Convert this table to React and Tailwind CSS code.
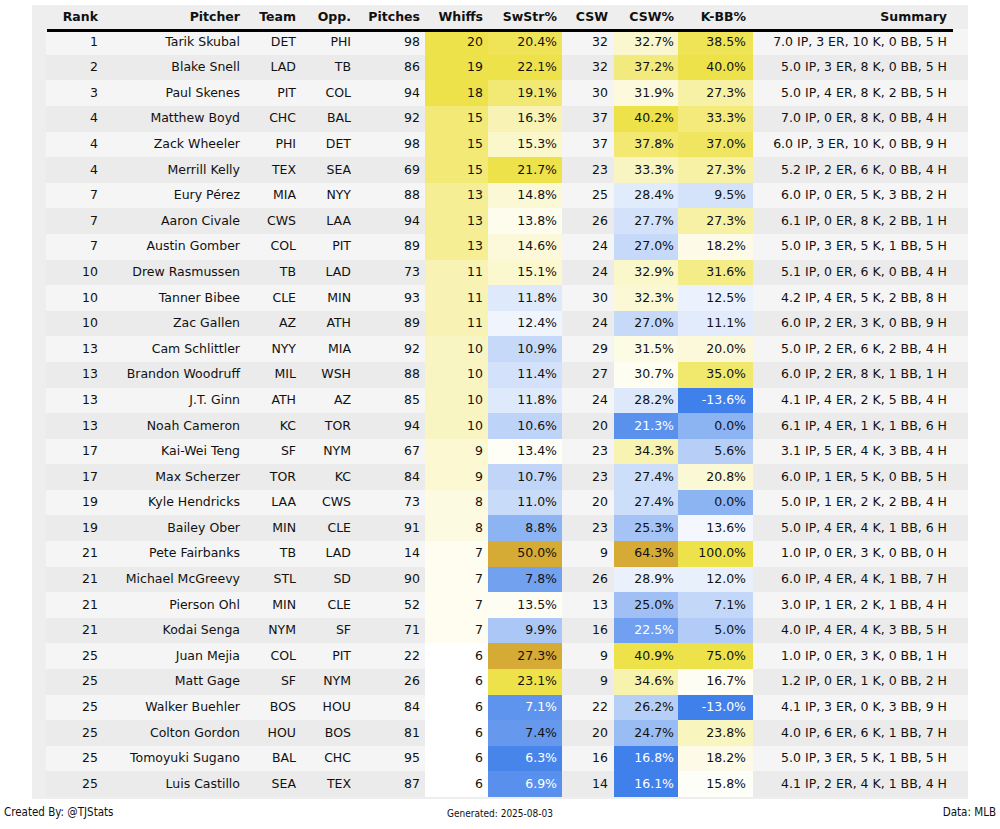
import React from "react";

const rows = [
  [1, "Tarik Skubal", "DET", "PHI", 98, 20, 20.4, 32, 32.7, 38.5, "7.0 IP, 3 ER, 10 K, 0 BB, 5 H"],
  [2, "Blake Snell", "LAD", "TB", 86, 19, 22.1, 32, 37.2, 40.0, "5.0 IP, 3 ER, 8 K, 0 BB, 5 H"],
  [3, "Paul Skenes", "PIT", "COL", 94, 18, 19.1, 30, 31.9, 27.3, "5.0 IP, 4 ER, 8 K, 2 BB, 5 H"],
  [4, "Matthew Boyd", "CHC", "BAL", 92, 15, 16.3, 37, 40.2, 33.3, "7.0 IP, 0 ER, 8 K, 0 BB, 4 H"],
  [4, "Zack Wheeler", "PHI", "DET", 98, 15, 15.3, 37, 37.8, 37.0, "6.0 IP, 3 ER, 10 K, 0 BB, 9 H"],
  [4, "Merrill Kelly", "TEX", "SEA", 69, 15, 21.7, 23, 33.3, 27.3, "5.2 IP, 2 ER, 6 K, 0 BB, 4 H"],
  [7, "Eury Pérez", "MIA", "NYY", 88, 13, 14.8, 25, 28.4, 9.5, "6.0 IP, 0 ER, 5 K, 3 BB, 2 H"],
  [7, "Aaron Civale", "CWS", "LAA", 94, 13, 13.8, 26, 27.7, 27.3, "6.1 IP, 0 ER, 8 K, 2 BB, 1 H"],
  [7, "Austin Gomber", "COL", "PIT", 89, 13, 14.6, 24, 27.0, 18.2, "5.0 IP, 3 ER, 5 K, 1 BB, 5 H"],
  [10, "Drew Rasmussen", "TB", "LAD", 73, 11, 15.1, 24, 32.9, 31.6, "5.1 IP, 0 ER, 6 K, 0 BB, 4 H"],
  [10, "Tanner Bibee", "CLE", "MIN", 93, 11, 11.8, 30, 32.3, 12.5, "4.2 IP, 4 ER, 5 K, 2 BB, 8 H"],
  [10, "Zac Gallen", "AZ", "ATH", 89, 11, 12.4, 24, 27.0, 11.1, "6.0 IP, 2 ER, 3 K, 0 BB, 9 H"],
  [13, "Cam Schlittler", "NYY", "MIA", 92, 10, 10.9, 29, 31.5, 20.0, "5.0 IP, 2 ER, 6 K, 2 BB, 4 H"],
  [13, "Brandon Woodruff", "MIL", "WSH", 88, 10, 11.4, 27, 30.7, 35.0, "6.0 IP, 2 ER, 8 K, 1 BB, 1 H"],
  [13, "J.T. Ginn", "ATH", "AZ", 85, 10, 11.8, 24, 28.2, -13.6, "4.1 IP, 4 ER, 2 K, 5 BB, 4 H"],
  [13, "Noah Cameron", "KC", "TOR", 94, 10, 10.6, 20, 21.3, 0.0, "6.1 IP, 4 ER, 1 K, 1 BB, 6 H"],
  [17, "Kai-Wei Teng", "SF", "NYM", 67, 9, 13.4, 23, 34.3, 5.6, "3.1 IP, 5 ER, 4 K, 3 BB, 4 H"],
  [17, "Max Scherzer", "TOR", "KC", 84, 9, 10.7, 23, 27.4, 20.8, "6.0 IP, 1 ER, 5 K, 0 BB, 5 H"],
  [19, "Kyle Hendricks", "LAA", "CWS", 73, 8, 11.0, 20, 27.4, 0.0, "5.0 IP, 1 ER, 2 K, 2 BB, 4 H"],
  [19, "Bailey Ober", "MIN", "CLE", 91, 8, 8.8, 23, 25.3, 13.6, "5.0 IP, 4 ER, 4 K, 1 BB, 6 H"],
  [21, "Pete Fairbanks", "TB", "LAD", 14, 7, 50.0, 9, 64.3, 100.0, "1.0 IP, 0 ER, 3 K, 0 BB, 0 H"],
  [21, "Michael McGreevy", "STL", "SD", 90, 7, 7.8, 26, 28.9, 12.0, "6.0 IP, 4 ER, 4 K, 1 BB, 7 H"],
  [21, "Pierson Ohl", "MIN", "CLE", 52, 7, 13.5, 13, 25.0, 7.1, "3.0 IP, 1 ER, 2 K, 1 BB, 4 H"],
  [21, "Kodai Senga", "NYM", "SF", 71, 7, 9.9, 16, 22.5, 5.0, "4.0 IP, 4 ER, 4 K, 3 BB, 5 H"],
  [25, "Juan Mejia", "COL", "PIT", 22, 6, 27.3, 9, 40.9, 75.0, "1.0 IP, 0 ER, 3 K, 0 BB, 1 H"],
  [25, "Matt Gage", "SF", "NYM", 26, 6, 23.1, 9, 34.6, 16.7, "1.2 IP, 0 ER, 1 K, 0 BB, 2 H"],
  [25, "Walker Buehler", "BOS", "HOU", 84, 6, 7.1, 22, 26.2, -13.0, "4.1 IP, 3 ER, 0 K, 3 BB, 9 H"],
  [25, "Colton Gordon", "HOU", "BOS", 81, 6, 7.4, 20, 24.7, 23.8, "4.0 IP, 6 ER, 6 K, 1 BB, 7 H"],
  [25, "Tomoyuki Sugano", "BAL", "CHC", 95, 6, 6.3, 16, 16.8, 18.2, "5.0 IP, 3 ER, 5 K, 1 BB, 5 H"],
  [25, "Luis Castillo", "SEA", "TEX", 87, 6, 6.9, 14, 16.1, 15.8, "4.1 IP, 2 ER, 4 K, 1 BB, 4 H"],
];

const BLUE = [64, 128, 234];
const WHITE = [255, 255, 255];
const YELLOW = [238, 226, 74];
const GOLD = [213, 170, 53];

const mix = (a, b, t) => `rgb(${a.map((v, i) => Math.round(v + (b[i] - v) * t)).join(",")})`;

// center, scale below, scale above, "over" cutoff, white text below
const scales = {
  whiffs: { c: 6, lo: 1, hi: 12, over: 999, white: -999 },
  swstr: { c: 13, lo: 7, hi: 8, over: 25, white: 7.3 },
  csw: { c: 30, lo: 10, hi: 10, over: 50, white: 23 },
  kbb: { c: 15, lo: 25, hi: 25, over: 999, white: -5 },
};

const heat = (v, key) => {
  const s = scales[key];
  if (v > s.over) return { background: mix(GOLD, GOLD, 0), color: "#111" };
  const t = v < s.c ? -(s.c - v) / s.lo : (v - s.c) / s.hi;
  const bg = t < 0 ? mix(WHITE, BLUE, Math.min(1, -t)) : mix(WHITE, YELLOW, Math.min(1, t));
  return { background: bg, color: v < s.white ? "#ffffff" : "#111" };
};

const cols = "grid grid-cols-[57px_142px_56px_55px_69px_63px_74px_52px_64px_75px_200px]";

const Cell = ({ children, pr = "pr-[5px]", style, bold }) => (
  <div
    className={`flex items-center justify-end ${pr} ${bold ? "font-bold" : ""}`}
    style={style}
  >
    {children}
  </div>
);

const pct = (v) => `${v.toFixed(1)}%`;

export default function App() {
  return (
    <div className="w-[1000px] h-[829px] bg-white font-['DejaVu_Sans',sans-serif] text-[12.5px] text-[#111]">
      <div className="pt-[5px] pl-[32px]">
        <div className="w-[936px] h-[794px] bg-[#eeeeee] pl-[14px]">
          <div className={`${cols} h-[24.2px]`}>
            <Cell bold>Rank</Cell>
            <Cell bold>Pitcher</Cell>
            <Cell bold>Team</Cell>
            <Cell bold>Opp.</Cell>
            <Cell bold>Pitches</Cell>
            <Cell bold>Whiffs</Cell>
            <Cell bold>SwStr%</Cell>
            <Cell bold pr="pr-[6px]">CSW</Cell>
            <Cell bold pr="pr-[4px]">CSW%</Cell>
            <Cell bold pr="pr-[7px]">K-BB%</Cell>
            <Cell bold pr="pr-[6px]">Summary</Cell>
          </div>
          <div className="relative z-10 ml-[1px] w-[906px] h-[3px] -mb-[3px] bg-black" />
          {rows.map((r, i) => (
            <div
              key={i}
              className={`${cols} h-[25.6px] ${i % 2 === 0 ? "bg-[#f5f5f5]" : "bg-[#ebebeb]"}`}
            >
              <Cell>{r[0]}</Cell>
              <Cell>{r[1]}</Cell>
              <Cell>{r[2]}</Cell>
              <Cell>{r[3]}</Cell>
              <Cell>{r[4]}</Cell>
              <Cell style={heat(r[5], "whiffs")}>{r[5]}</Cell>
              <Cell style={heat(r[6], "swstr")}>{pct(r[6])}</Cell>
              <Cell pr="pr-[6px]">{r[7]}</Cell>
              <Cell pr="pr-[4px]" style={heat(r[8], "csw")}>{pct(r[8])}</Cell>
              <Cell pr="pr-[7px]" style={heat(r[9], "kbb")}>{pct(r[9])}</Cell>
              <Cell pr="pr-[6px]">{r[10]}</Cell>
            </div>
          ))}
        </div>
      </div>
      <div className="flex items-center justify-between h-[30px] px-[4px] pb-[2px] text-[11.5px] font-stretch-condensed">
        <span className="w-[200px]">Created By: @TJStats</span>
        <span className="text-[10px]">Generated: 2025-08-03</span>
        <span className="w-[200px] text-right">Data: MLB</span>
      </div>
    </div>
  );
}
